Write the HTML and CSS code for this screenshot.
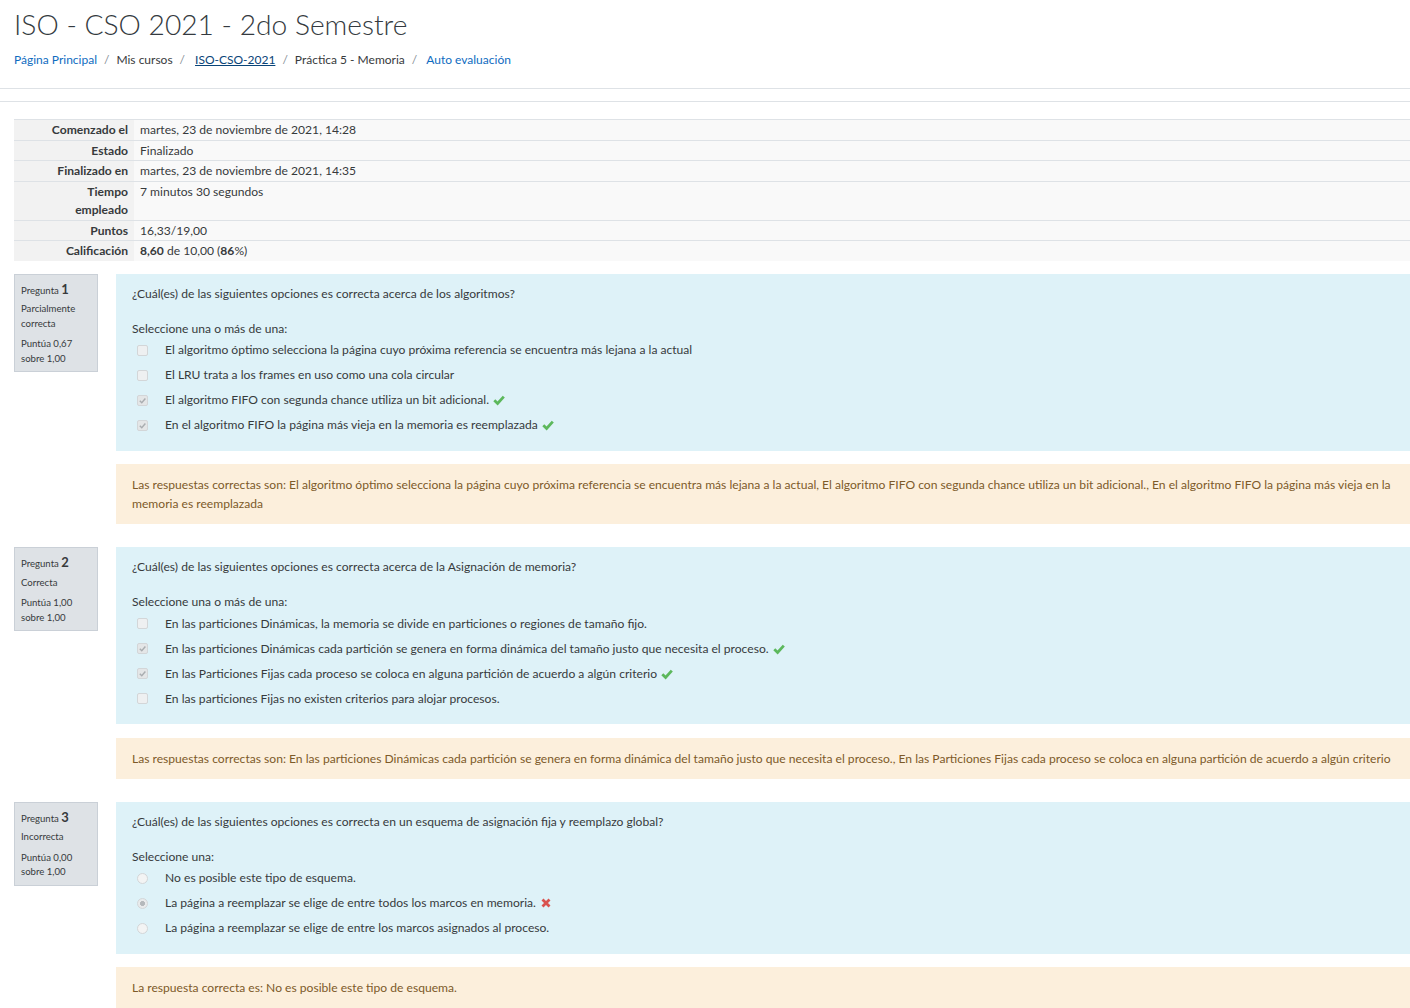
FILE: index.html
```html
<!DOCTYPE html>
<html lang="es">
<head>
<meta charset="utf-8">
<title>ISO - CSO 2021 - 2do Semestre</title>
<link rel="stylesheet" href="styles.css">
</head>
<body>
<header class="page-header">
  <h1 class="title">ISO - CSO 2021 - 2do Semestre</h1>
  <nav class="crumbs">
    <a class="crumb-link" href="#">Página Principal</a><span class="sep">/</span>
    <span class="crumb">Mis cursos</span><span class="sep">/</span>
    <a class="crumb-link current" href="#">ISO-CSO-2021</a><span class="sep">/</span>
    <span class="crumb">Práctica 5 - Memoria</span><span class="sep">/</span>
    <a class="crumb-link" href="#">Auto evaluación</a>
  </nav>
</header>
<div class="rule"></div>

<main class="main">
  <table class="summary">
    <tr><th>Comenzado el</th><td>martes, 23 de noviembre de 2021, 14:28</td></tr>
    <tr><th>Estado</th><td>Finalizado</td></tr>
    <tr><th>Finalizado en</th><td>martes, 23 de noviembre de 2021, 14:35</td></tr>
    <tr><th>Tiempo<br>empleado</th><td>7 minutos 30 segundos</td></tr>
    <tr><th>Puntos</th><td>16,33/19,00</td></tr>
    <tr><th>Calificación</th><td><b>8,60</b> de 10,00 (<b>86</b>%)</td></tr>
  </table>

  <section class="que">
    <div class="info">
      <div class="qno"><span class="qlabel">Pregunta</span> <b>1</b></div>
      <div class="state">Parcialmente correcta</div>
      <div class="grade">Puntúa 0,67 sobre 1,00</div>
    </div>
    <div class="content">
      <div class="formulation">
        <div class="qtext">¿Cuál(es) de las siguientes opciones es correcta acerca de los algoritmos?</div>
        <div class="prompt">Seleccione una o más de una:</div>
        <div class="opt"><span class="cb"></span><span>El algoritmo óptimo selecciona la página cuyo próxima referencia se encuentra más lejana a la actual</span></div>
        <div class="opt"><span class="cb"></span><span>El LRU trata a los frames en uso como una cola circular</span></div>
        <div class="opt"><span class="cb checked"><svg viewBox="0 0 10 10"><path d="M2 5.2 L4.2 7.4 L8.2 2.8" fill="none" stroke="#a9adb0" stroke-width="1.6"/></svg></span><span>El algoritmo FIFO con segunda chance utiliza un bit adicional.</span><svg class="ok" viewBox="0 0 12 12"><path d="M1.3 6.2 L4.6 9.4 L10.8 2.6" fill="none" stroke="#5cb85c" stroke-width="2.8"/></svg></div>
        <div class="opt"><span class="cb checked"><svg viewBox="0 0 10 10"><path d="M2 5.2 L4.2 7.4 L8.2 2.8" fill="none" stroke="#a9adb0" stroke-width="1.6"/></svg></span><span>En el algoritmo FIFO la página más vieja en la memoria es reemplazada</span><svg class="ok" viewBox="0 0 12 12"><path d="M1.3 6.2 L4.6 9.4 L10.8 2.6" fill="none" stroke="#5cb85c" stroke-width="2.8"/></svg></div>
      </div>
      <div class="outcome">Las respuestas correctas son: El algoritmo óptimo selecciona la página cuyo próxima referencia se encuentra más lejana a la actual, El algoritmo FIFO con segunda chance utiliza un bit adicional., En el algoritmo FIFO la página más vieja en la memoria es reemplazada</div>
    </div>
  </section>

  <section class="que">
    <div class="info">
      <div class="qno"><span class="qlabel">Pregunta</span> <b>2</b></div>
      <div class="state">Correcta</div>
      <div class="grade">Puntúa 1,00 sobre 1,00</div>
    </div>
    <div class="content">
      <div class="formulation">
        <div class="qtext">¿Cuál(es) de las siguientes opciones es correcta acerca de la Asignación de memoria?</div>
        <div class="prompt">Seleccione una o más de una:</div>
        <div class="opt"><span class="cb"></span><span>En las particiones Dinámicas, la memoria se divide en particiones o regiones de tamaño fijo.</span></div>
        <div class="opt"><span class="cb checked"><svg viewBox="0 0 10 10"><path d="M2 5.2 L4.2 7.4 L8.2 2.8" fill="none" stroke="#a9adb0" stroke-width="1.6"/></svg></span><span>En las particiones Dinámicas cada partición se genera en forma dinámica del tamaño justo que necesita el proceso.</span><svg class="ok" viewBox="0 0 12 12"><path d="M1.3 6.2 L4.6 9.4 L10.8 2.6" fill="none" stroke="#5cb85c" stroke-width="2.8"/></svg></div>
        <div class="opt"><span class="cb checked"><svg viewBox="0 0 10 10"><path d="M2 5.2 L4.2 7.4 L8.2 2.8" fill="none" stroke="#a9adb0" stroke-width="1.6"/></svg></span><span>En las Particiones Fijas cada proceso se coloca en alguna partición de acuerdo a algún criterio</span><svg class="ok" viewBox="0 0 12 12"><path d="M1.3 6.2 L4.6 9.4 L10.8 2.6" fill="none" stroke="#5cb85c" stroke-width="2.8"/></svg></div>
        <div class="opt"><span class="cb"></span><span>En las particiones Fijas no existen criterios para alojar procesos.</span></div>
      </div>
      <div class="outcome">Las respuestas correctas son: En las particiones Dinámicas cada partición se genera en forma dinámica del tamaño justo que necesita el proceso., En las Particiones Fijas cada proceso se coloca en alguna partición de acuerdo a algún criterio</div>
    </div>
  </section>

  <section class="que">
    <div class="info">
      <div class="qno"><span class="qlabel">Pregunta</span> <b>3</b></div>
      <div class="state">Incorrecta</div>
      <div class="grade">Puntúa 0,00 sobre 1,00</div>
    </div>
    <div class="content">
      <div class="formulation">
        <div class="qtext">¿Cuál(es) de las siguientes opciones es correcta en un esquema de asignación fija y reemplazo global?</div>
        <div class="prompt">Seleccione una:</div>
        <div class="opt"><span class="rb"></span><span>No es posible este tipo de esquema.</span></div>
        <div class="opt"><span class="rb checked"></span><span>La página a reemplazar se elige de entre todos los marcos en memoria.</span><svg class="bad" viewBox="0 0 12 12"><path d="M2.5 2.5 L9.5 9.5 M9.5 2.5 L2.5 9.5" fill="none" stroke="#d9534f" stroke-width="2.8"/></svg></div>
        <div class="opt"><span class="rb"></span><span>La página a reemplazar se elige de entre los marcos asignados al proceso.</span></div>
      </div>
      <div class="outcome">La respuesta correcta es: No es posible este tipo de esquema.</div>
    </div>
  </section>
</main>
</body>
</html>
```
FILE: styles.css
```css
* { box-sizing: border-box; }
html, body { margin: 0; padding: 0; }
body {
  font-family: "Lato", "Noto Sans", sans-serif;
  font-size: 12.1px;
  line-height: 18px;
  color: #373a3c;
  background: #fff;
  overflow: hidden;
}
.page-header { padding: 5px 0 0 14px; }
.title {
  margin: 0;
  font-size: 28.2px;
  line-height: 38px;
  font-weight: 300;
  color: #343a40;
}
.crumbs {
  margin-top: 8px;
  display: flex;
  align-items: center;
  font-size: 12px;
  line-height: 18px;
}
.crumb-link { color: #0f6cbf; text-decoration: none; }
.crumb-link.current { color: #094478; text-decoration: underline; padding-left: 3px; }
.crumb { color: #373a3c; }
.sep { color: #868e96; padding: 0 7px; }
.crumbs .sep:last-of-type { padding-right: 9px; }
.rule {
  margin-top: 19px;
  height: 14px;
  border-top: 1px solid #dee2e6;
  border-bottom: 1px solid #dee2e6;
}
.main { padding: 17px 0 0 14px; }
.summary {
  width: 100%;
  border-collapse: collapse;
  margin-bottom: 13px;
}
.summary th, .summary td {
  border-top: 1px solid #dee2e6;
  padding: 1px 6px 0.67px 6px;
  vertical-align: top;
  line-height: 18px;
}
.summary th {
  width: 120px;
  text-align: right;
  font-weight: 700;
  background: #f2f2f2;
  white-space: nowrap;
}
.summary td { background: #f9f9f9; }
.que {
  display: flex;
  align-items: flex-start;
  gap: 18px;
  margin-bottom: 23px;
}
.info {
  flex: 0 0 84px;
  background: #dee2e6;
  border: 1px solid #cad0d7;
  padding: 7px 6px 5px 6px;
  font-size: 9.6px;
  line-height: 14.5px;
  color: #373a3c;
}
.qno { margin-bottom: 4px; }
.qno b { font-size: 13px; font-weight: 700; }
.state { margin-bottom: 6px; }
.content { flex: 1; min-width: 0; }
.formulation {
  background: #def2f8;
  padding: 11px 16px 13px 16px;
  color: #373a3c;
}
.qtext { margin-bottom: 17px; }
.opt {
  display: flex;
  align-items: center;
  height: 25px;
  padding-left: 5px;
}
.cb, .rb {
  flex: 0 0 auto;
  width: 11px;
  height: 11px;
  margin-right: 17px;
  background: #eef0f1;
  border: 1px solid #d3d6d8;
  display: inline-flex;
  align-items: center;
  justify-content: center;
}
.cb { border-radius: 2px; }
.cb.checked { background: #e4e6e7; }
.cb svg { width: 9px; height: 9px; }
.rb { border-radius: 50%; background: #f3f4f4; }
.rb.checked { background: radial-gradient(circle, #b5b9bc 0 2.2px, #e9ebec 2.7px); }
.ok, .bad { width: 12px; height: 12px; margin-left: 4px; flex: 0 0 auto; }
.outcome {
  margin-top: 13.5px;
  background: #fcefdc;
  color: #7d5a29;
  padding: 11px 16px 11px 16px;
  line-height: 19px;
}
```
